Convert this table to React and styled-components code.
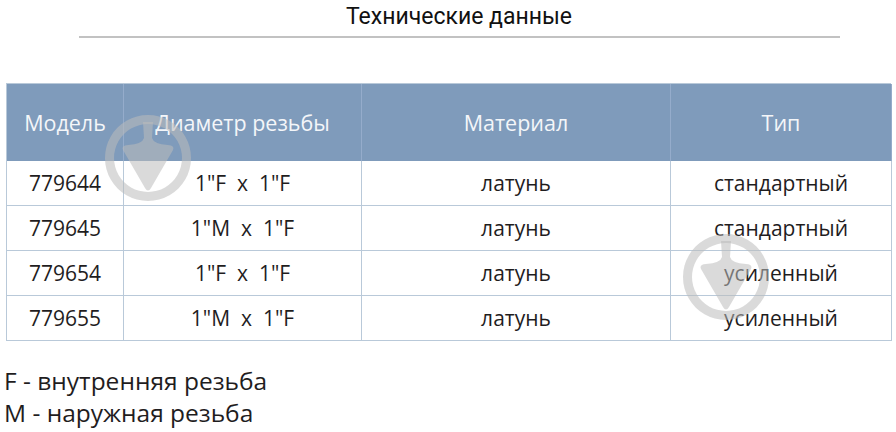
import React from "react";
import styled, { createGlobalStyle } from "styled-components";

const Global = createGlobalStyle`
  html, body { margin: 0; padding: 0; background: #fff; }
  body { width: 896px; height: 432px; overflow: hidden; }
`;

const Page = styled.div`
  position: relative;
  width: 896px;
  height: 432px;
  display: flex;
  flex-direction: column;
  font-family: "Open Sans", "Noto Sans", sans-serif;
  color: #1f1d1e;
`;

const Title = styled.h1`
  margin: 0;
  padding-top: 2px;
  height: 29px;
  font-family: Roboto, sans-serif;
  font-weight: 400;
  font-size: 23px;
  line-height: 29px;
  text-align: center;
  color: #111;
  padding-left: 22px;
`;

const Rule = styled.div`
  margin: 5px 56px 0 79px;
  height: 2px;
  background: #c2c2c2;
`;

const Table = styled.div`
  margin: 45px 5px 0 6px;
  display: grid;
  grid-template-columns: 117px 238px 309px 221px;
  border-left: 1px solid #b9c9d9;
  border-top: 1px solid #b9c9d9;
`;

const HeadCell = styled.div`
  height: 77px;
  display: flex;
  align-items: center;
  justify-content: center;
  background: #7f9bbb;
  color: #f4f6f9;
  font-size: 21.5px;
  border-right: 1px solid #95accb;
`;

const Cell = styled.div`
  height: 44px;
  display: flex;
  align-items: center;
  justify-content: center;
  font-size: 21px;
  white-space: pre;
  border-right: 1px solid #b9c9d9;
  border-bottom: 1px solid #b9c9d9;
`;

const Notes = styled.div`
  margin: 24px 0 0 4px;
  font-size: 24.5px;
  line-height: 32px;
`;

const Mark = styled.svg`
  position: absolute;
  width: 88px;
  height: 88px;
  pointer-events: none;
`;

const Watermark = ({ x, y }) => (
  <Mark viewBox="0 0 88 88" style={{ left: x - 44, top: y - 44 }}>
    <g fill="rgba(188,188,188,0.55)">
      <path
        fillRule="evenodd"
        d="M44 1 A43 43 0 1 1 43.99 1 Z M44 10 A34 34 0 1 0 44.01 10 Z"
      />
      <path d="M39 8 L49 8 L48 24 Q49.5 30 64 31 Q71 31.5 69 36 L47 74 Q44 79 41 74 L19 36 Q17 31.5 24 31 Q38.5 30 40 24 Z" />
    </g>
  </Mark>
);

const rows = [
  ["779644", "1\"F  x  1\"F", "латунь", "стандартный"],
  ["779645", "1\"M  x  1\"F", "латунь", "стандартный"],
  ["779654", "1\"F  x  1\"F", "латунь", "усиленный"],
  ["779655", "1\"M  x  1\"F", "латунь", "усиленный"],
];

export default function App() {
  return (
    <>
      <Global />
      <Page>
        <Title>Технические данные</Title>
        <Rule />
        <Table>
          {["Модель", "Диаметр резьбы", "Материал", "Тип"].map((h) => (
            <HeadCell key={h}>{h}</HeadCell>
          ))}
          {rows.map((r) => r.map((c, i) => <Cell key={r[0] + i}>{c}</Cell>))}
        </Table>
        <Notes>
          <div>F - внутренняя резьба</div>
          <div>M - наружная резьба</div>
        </Notes>
        <Watermark x={148} y={158} />
        <Watermark x={726} y={277} />
      </Page>
    </>
  );
}
